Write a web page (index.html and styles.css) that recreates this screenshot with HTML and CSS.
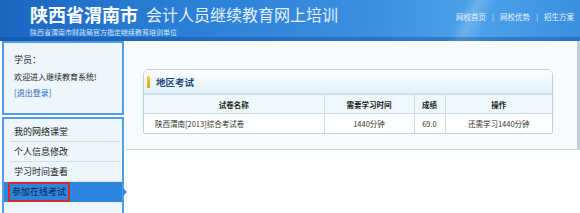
FILE: index.html
```html
<!DOCTYPE html>
<html lang="zh-CN">
<head>
<meta charset="utf-8">
<title>陕西省渭南市会计人员继续教育网上培训</title>
<link rel="stylesheet" href="styles.css">
</head>
<body>
<div class="page">
  <header class="top">
    <div class="brand">
      <div class="title"><span class="city">陕西省渭南市</span><span class="sys">会计人员继续教育网上培训</span></div>
      <div class="sub">陕西省渭南市财政局官方指定继续教育培训单位</div>
    </div>
    <nav class="nav">
      <a>网校首页</a><span class="sep">|</span><a>网校优势</a><span class="sep">|</span><a>招生方案</a>
    </nav>
  </header>
  <div class="body">
    <aside class="side">
      <div class="userbox">
        <div class="line">学员：</div>
        <div class="line">欢迎进入继续教育系统!</div>
        <div class="line"><a class="logout">[退出登录]</a></div>
      </div>
      <ul class="menu">
        <li class="item">我的网络课堂</li>
        <li class="item">个人信息修改</li>
        <li class="item">学习时间查看</li>
        <li class="item active"><span class="mark">参加在线考试</span></li>
      </ul>
    </aside>
    <main class="main">
      <div class="panel">
        <div class="card">
          <div class="card-head"><i class="bar"></i>地区考试</div>
          <table class="exam">
            <thead>
              <tr><th class="c1">试卷名称</th><th class="c2">需要学习时间</th><th class="c3">成绩</th><th class="c4">操作</th></tr>
            </thead>
            <tbody>
              <tr><td class="left">陕西渭南[2013]综合考试卷</td><td>1440分钟</td><td>69.0</td><td>还需学习1440分钟</td></tr>
            </tbody>
          </table>
        </div>
      </div>
    </main>
  </div>
</div>
</body>
</html>
```
FILE: styles.css
```css
* { box-sizing: border-box; }
html, body { margin: 0; padding: 0; }
body {
  width: 580px;
  height: 213px;
  overflow: hidden;
  background: #fff;
  font-family: "Noto Sans CJK SC", "Noto Sans", sans-serif;
  color: #333;
}
.page { width: 580px; height: 213px; overflow: hidden; }

.top {
  height: 41px;
  display: flex;
  justify-content: space-between;
  background:
    linear-gradient(115deg, transparent 78%, rgba(255,255,255,0.18) 80%, transparent 83%),
    linear-gradient(to right, #1c66c2 0%, #2a7ed6 30%, #3b90e2 65%, #4ea2ea 82%, #3a8fe0 100%);
  box-shadow: inset 0 -4px 0 rgba(10, 70, 150, 0.35);
}
.brand { padding: 1px 0 0 30px; }
.title { display: flex; align-items: center; gap: 8px; height: 26px; }
.city { font-size: 18px; font-weight: 700; color: #fff; line-height: normal; }
.sys { font-size: 16px; color: #e6f2ff; line-height: normal; }
.sub { font-size: 7px; line-height: normal; margin-top: 0; color: #d3e8ff; }
.nav {
  display: flex;
  gap: 6px;
  padding: 12px 6px 0 0;
  font-size: 7.5px;
  line-height: 10px;
  height: 22px;
  color: #eaf4ff;
}
.nav a { color: #eaf4ff; }
.sep { color: #cfe4fb; }

.body { display: flex; height: 172px; }

.side { width: 122px; margin-left: 2px; }
.userbox {
  height: 74px;
  border: 2px solid #4f9de6;
  background: #edf6fd;
  padding: 9px 0 0 10px;
}
.line { font-size: 8px; line-height: 16.5px; color: #222; }
.line:first-child { font-size: 9px; }
.logout { color: #2a6cc0; }

.menu {
  list-style: none;
  margin: 2px 0 0;
  padding: 3px 0 0;
  height: 96px;
  border: 2px solid #4f9de6;
  border-bottom: 0;
  background: #edf6fd;
}
.item {
  position: relative;
  height: 20px;
  line-height: 19px;
  font-size: 9px;
  color: #222;
  margin: 0 2px 0 6px;
  padding-left: 4px;
  border-bottom: 1px solid #d3dde7;
}
.item.active {
  margin: 0;
  padding-left: 4px;
  background: #2d85de;
  border-bottom: 0;
  line-height: 16px;
}
.item.active::after {
  content: "";
  position: absolute;
  right: -5px;
  top: 6px;
  border-left: 4px solid #2d85de;
  border-top: 4px solid transparent;
  border-bottom: 4px solid transparent;
}
.mark {
  display: inline-block;
  border: 2px solid #d42a2e;
  padding: 0 2px;
  color: #10234a;
  height: 20px;
  line-height: 16px;
}

.main { flex: 1; margin-left: 2px; }
.panel {
  height: 109px;
  background: #f7fbfe;
  border-bottom: 1px solid #cdd6de;
  border-right: 3px solid #c4cdd6;
  padding: 28px 0 0 17px;
}
.card {
  width: 410px;
  border: 1px solid #bdd3e2;
  border-radius: 6px 6px 2px 2px;
  background: #fff;
  overflow: hidden;
}
.card-head {
  height: 24px;
  display: flex;
  align-items: center;
  padding-left: 3px;
  font-size: 9.5px;
  font-weight: 700;
  color: #1f4a78;
  background: linear-gradient(#fcfeff, #e0f0fa);
  border-bottom: 1px solid #cfe1ec;
}
.bar {
  width: 3px;
  height: 12px;
  margin-right: 6px;
  background: linear-gradient(#f7d24a, #e3a200);
  border-radius: 1px;
}
.exam {
  width: 100%;
  border-collapse: collapse;
  font-size: 7.5px;
  color: #333;
}
.exam th, .exam td {
  height: 19px;
  padding: 0;
  text-align: center;
  border: 1px solid #c9dbe6;
  font-weight: 400;
}
.exam tr > :first-child { border-left: 0; }
.exam tr > :last-child { border-right: 0; }
.exam tbody tr:last-child td { border-bottom: 0; }
.exam th { font-weight: 700; background: #eef8fc; color: #222; }
.exam td { background: #fff; }
.exam td.left { text-align: left; padding-left: 11px; }
.c1 { width: 180px; }
.c2 { width: 90px; }
.c3 { width: 31px; }
.c4 { width: auto; }
```
